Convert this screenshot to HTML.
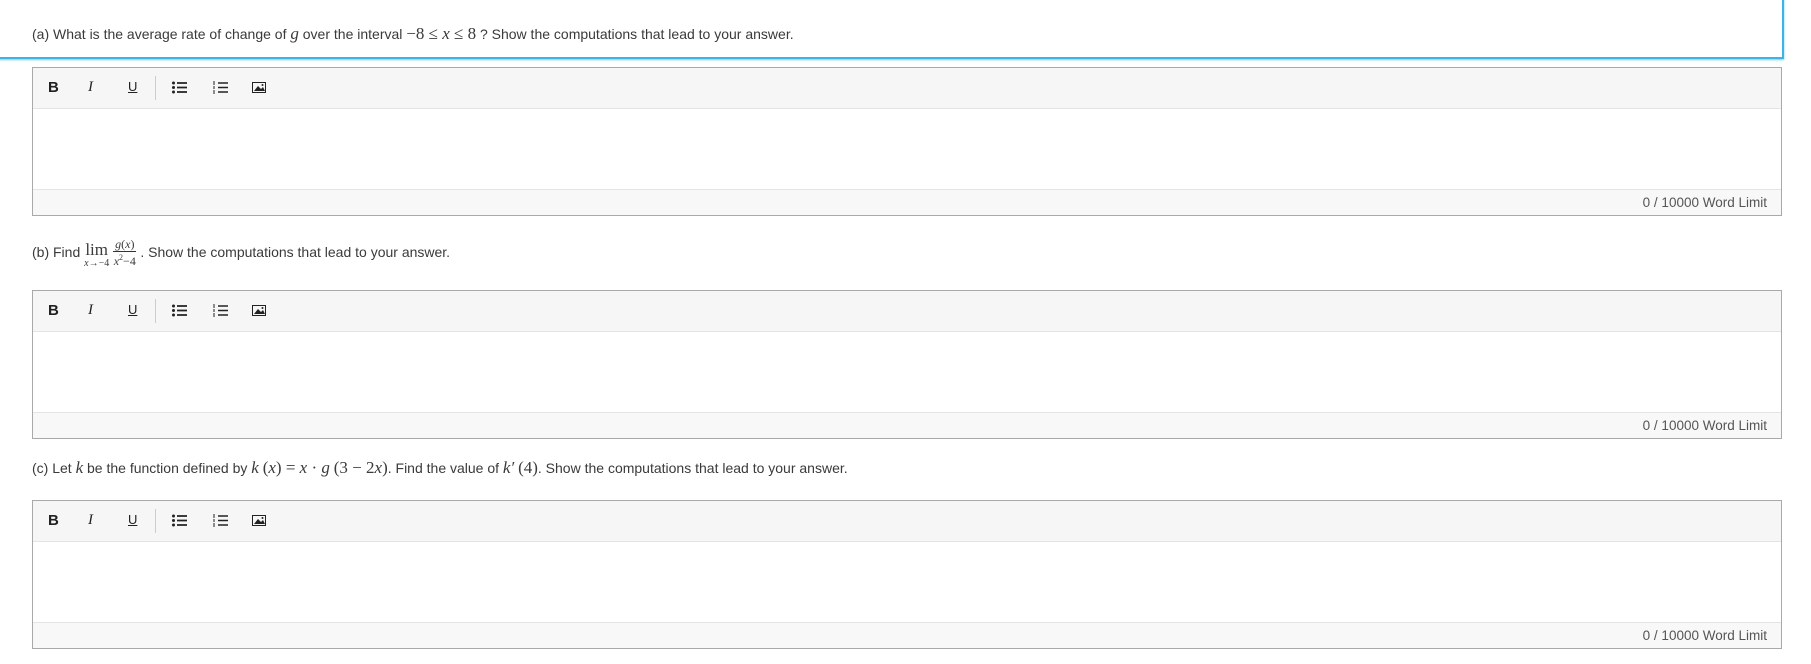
<!DOCTYPE html>
<html><head><meta charset="utf-8"><style>
body{margin:0;width:1811px;height:664px;background:#fff;font-family:"Liberation Sans",sans-serif;color:#3a3a3a;position:relative;overflow:hidden}
.q{position:absolute;left:32px;font-size:14px;white-space:nowrap}
.m{font-family:"Liberation Serif",serif;font-size:17px}
.mi{font-family:"Liberation Serif",serif;font-style:italic;font-size:17px}
.ed{position:absolute;left:32px;width:1748px;border:1px solid #a9a9a9;background:#fff}
.tb{height:40px;background:#f6f6f6;border-bottom:1px solid #e4e4e4;position:relative}
.body{height:80px}
.ft{height:25px;background:#f8f8f8;border-top:1px solid #e4e4e4;text-align:right;font-size:13.5px;color:#555;line-height:25px;padding-right:14px}
.ic{position:absolute;top:11px;font-size:15px;color:#222}
svg.i{position:absolute;top:13px}
</style></head><body>
<div style="position:absolute;left:-2px;top:-4px;width:1784px;height:61px;border:2px solid #3db3e6;border-left:none;border-top:none;box-shadow:0 1px 2px #7cc8ea"></div>
<div class="q" style="top:24px">(a) What is the average rate of change of <span class="mi">g</span> over the interval <span class="m">−8 ≤ </span><span class="mi">x</span><span class="m"> ≤ 8</span> ? Show the computations that lead to your answer.</div>

<div class="q" style="top:238px">(b) Find <span style="display:inline-block;vertical-align:-9px;text-align:center;line-height:11px"><span class="m" style="font-size:17px">lim</span><br><span style="font-size:10px;font-family:'Liberation Serif',serif"><i>x</i>→−4</span></span> <span style="display:inline-block;vertical-align:-8px;text-align:center;font-family:'Liberation Serif',serif;font-size:12px;line-height:13px"><span style="border-bottom:1px solid #333;padding:0 2px"><i>g</i>(<i>x</i>)</span><br><i>x</i><sup style="font-size:8px">2</sup>−4</span> . Show the computations that lead to your answer.</div>

<div class="q" style="top:458px">(c) Let <span class="mi">k</span> be the function defined by <span class="mi">k</span> <span class="m">(</span><span class="mi">x</span><span class="m">) = </span><span class="mi">x</span><span class="m"> · </span><span class="mi">g</span> <span class="m">(3 − 2</span><span class="mi">x</span><span class="m">)</span>. Find the value of <span class="mi">k′</span> <span class="m">(4)</span>. Show the computations that lead to your answer.</div>

<div class="ed" style="top:67px"><div class="tb">
<span class="ic" style="left:15px;font-weight:bold">B</span><span class="ic" style="left:55px;font-style:italic;font-family:'Liberation Serif',serif">I</span><span class="ic" style="left:95px;text-decoration:underline;font-size:13px">U</span><span style="position:absolute;left:122px;top:8px;width:1px;height:24px;background:#ccc"></span>
<svg class="i" style="left:139px" width="15" height="13" viewBox="0 0 15 13"><circle cx="1.5" cy="2" r="1.5" fill="#222"/><circle cx="1.5" cy="6.5" r="1.5" fill="#222"/><circle cx="1.5" cy="11" r="1.5" fill="#222"/><path d="M5 2h10M5 6.5h10M5 11h10" stroke="#222" stroke-width="1.8"/></svg>
<svg class="i" style="left:180px" width="15" height="13" viewBox="0 0 15 13"><path d="M1 0v4M1 5v3M1 9v4" stroke="#222" stroke-width="1"/><path d="M5 2h10M5 6.5h10M5 11h10" stroke="#222" stroke-width="1.6"/></svg>
<svg class="i" style="left:219px;top:14px" width="14" height="11" viewBox="0 0 14 11"><rect x=".5" y=".5" width="13" height="10" fill="none" stroke="#222"/><path d="M2 9l4-5 3 3 2-2 2 4z" fill="#222"/><circle cx="10.5" cy="3" r="1" fill="#222"/></svg>
</div><div class="body"></div><div class="ft">0 / 10000 Word Limit</div></div>

<div class="ed" style="top:290px"><div class="tb">
<span class="ic" style="left:15px;font-weight:bold">B</span><span class="ic" style="left:55px;font-style:italic;font-family:'Liberation Serif',serif">I</span><span class="ic" style="left:95px;text-decoration:underline;font-size:13px">U</span><span style="position:absolute;left:122px;top:8px;width:1px;height:24px;background:#ccc"></span>
<svg class="i" style="left:139px" width="15" height="13" viewBox="0 0 15 13"><circle cx="1.5" cy="2" r="1.5" fill="#222"/><circle cx="1.5" cy="6.5" r="1.5" fill="#222"/><circle cx="1.5" cy="11" r="1.5" fill="#222"/><path d="M5 2h10M5 6.5h10M5 11h10" stroke="#222" stroke-width="1.8"/></svg>
<svg class="i" style="left:180px" width="15" height="13" viewBox="0 0 15 13"><path d="M1 0v4M1 5v3M1 9v4" stroke="#222" stroke-width="1"/><path d="M5 2h10M5 6.5h10M5 11h10" stroke="#222" stroke-width="1.6"/></svg>
<svg class="i" style="left:219px;top:14px" width="14" height="11" viewBox="0 0 14 11"><rect x=".5" y=".5" width="13" height="10" fill="none" stroke="#222"/><path d="M2 9l4-5 3 3 2-2 2 4z" fill="#222"/><circle cx="10.5" cy="3" r="1" fill="#222"/></svg>
</div><div class="body"></div><div class="ft">0 / 10000 Word Limit</div></div>

<div class="ed" style="top:500px"><div class="tb">
<span class="ic" style="left:15px;font-weight:bold">B</span><span class="ic" style="left:55px;font-style:italic;font-family:'Liberation Serif',serif">I</span><span class="ic" style="left:95px;text-decoration:underline;font-size:13px">U</span><span style="position:absolute;left:122px;top:8px;width:1px;height:24px;background:#ccc"></span>
<svg class="i" style="left:139px" width="15" height="13" viewBox="0 0 15 13"><circle cx="1.5" cy="2" r="1.5" fill="#222"/><circle cx="1.5" cy="6.5" r="1.5" fill="#222"/><circle cx="1.5" cy="11" r="1.5" fill="#222"/><path d="M5 2h10M5 6.5h10M5 11h10" stroke="#222" stroke-width="1.8"/></svg>
<svg class="i" style="left:180px" width="15" height="13" viewBox="0 0 15 13"><path d="M1 0v4M1 5v3M1 9v4" stroke="#222" stroke-width="1"/><path d="M5 2h10M5 6.5h10M5 11h10" stroke="#222" stroke-width="1.6"/></svg>
<svg class="i" style="left:219px;top:14px" width="14" height="11" viewBox="0 0 14 11"><rect x=".5" y=".5" width="13" height="10" fill="none" stroke="#222"/><path d="M2 9l4-5 3 3 2-2 2 4z" fill="#222"/><circle cx="10.5" cy="3" r="1" fill="#222"/></svg>
</div><div class="body"></div><div class="ft">0 / 10000 Word Limit</div></div>
</body></html>
